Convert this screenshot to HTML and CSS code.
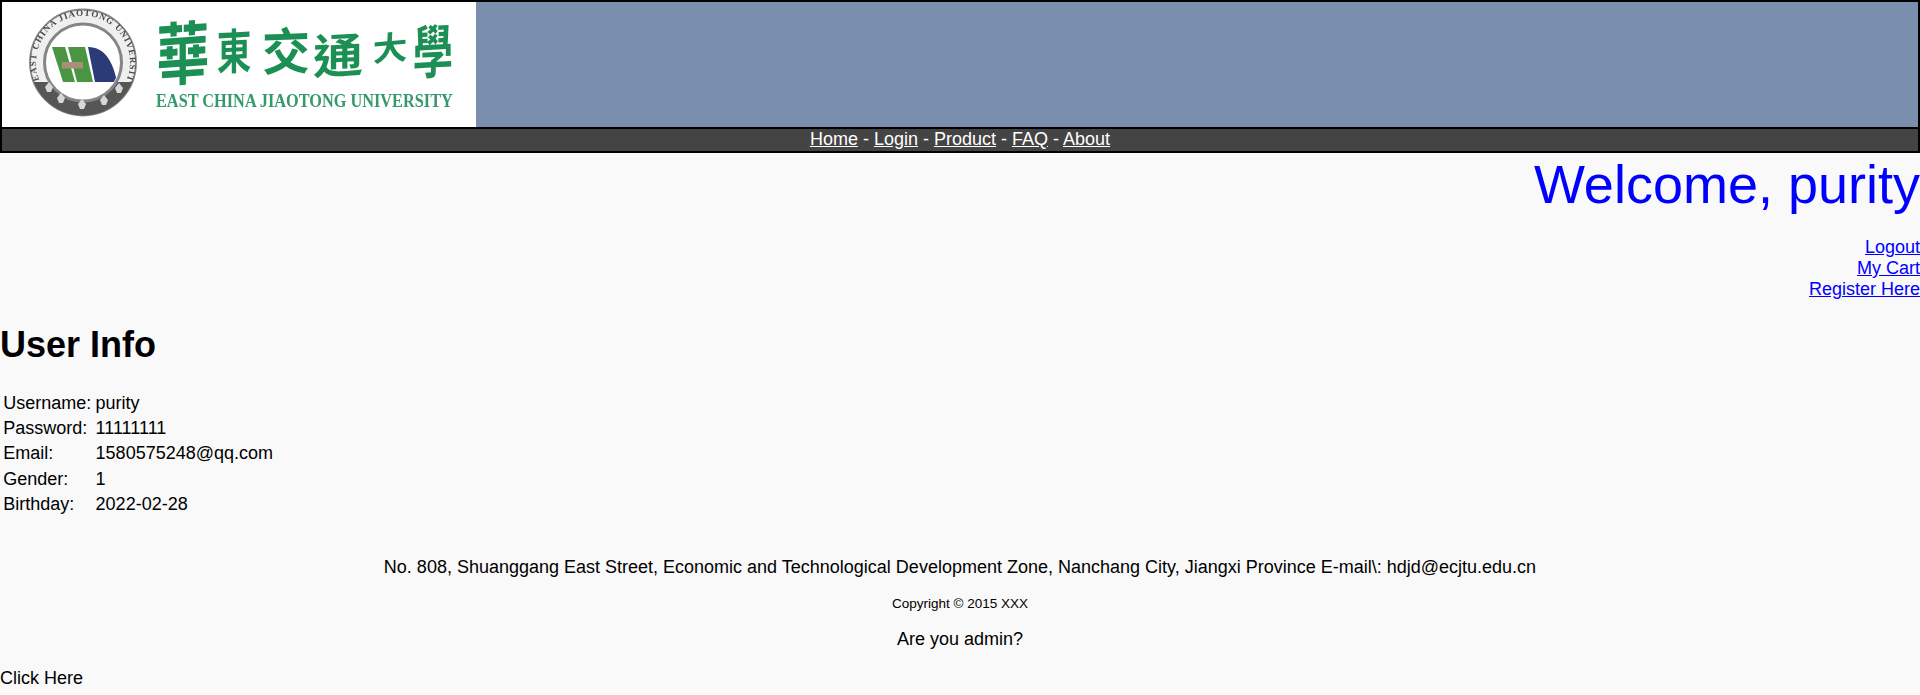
FILE: index.html
```html
<!DOCTYPE html>
<html lang="en">
<head>
<meta charset="utf-8">
<title>User Info</title>
<link rel="stylesheet" href="styles.css">
</head>
<body>
<header class="banner">
  <svg class="logo" viewBox="0 0 474 125" width="474" height="125" role="img" aria-label="East China Jiaotong University">
    <defs>
      <clipPath id="sealClip"><circle cx="81" cy="60.5" r="53"/></clipPath>
      <clipPath id="coreClip"><circle cx="81" cy="60.5" r="36.5"/></clipPath>
      <path id="sealArc" d="M37.3 78 A47 47 0 1 1 124.7 78" fill="none"/>
      <filter id="soft" x="-5%" y="-5%" width="110%" height="110%"><feGaussianBlur stdDeviation=".65"/></filter>
    </defs>
    <g filter="url(#soft)">
      <circle cx="81" cy="60.5" r="53" fill="#efefef" stroke="#858585" stroke-width="1.8"/>
      <path class="seal-band" d="M0 80H160V125H0Z" clip-path="url(#sealClip)"/>
      <text class="seal-text"><textPath href="#sealArc">EAST CHINA JIAOTONG UNIVERSITY</textPath></text>
      <circle cx="81" cy="60.5" r="38.5" fill="#fff" stroke="#858585" stroke-width="3"/>
      <g clip-path="url(#coreClip)">
        <path d="M50 45H63L73 80H61Z" fill="#4a9543"/>
        <path d="M66 45H83L91 80H75Z" fill="#4a9543"/>
        <path d="M86 45C103 45 111 60 115 80H93Z" fill="#2b3a78"/>
      </g>
      <rect x="60" y="60" width="21" height="6.5" fill="#a98f78"/>
      <g fill="#d8d8d8">
        <path d="M43 85l4-5 4 5-2 5h-4Z"/><path d="M55 96l4-5 4 5-2 5h-4Z"/><path d="M76 102l4-5 4 5-2 5h-4Z"/><path d="M98 98l4-5 4 5-2 5h-4Z"/><path d="M113 86l4-5 4 5-2 5h-4Z"/>
      </g>
      <g class="cn">
        <text transform="translate(181 77) skewY(-4) scale(1.1 1.42)">華</text>
        <text transform="translate(232 67) skewY(-3) scale(.72 1)">東</text>
        <text transform="translate(284 68) skewY(-2) scale(1 1.04)">交</text>
        <text transform="translate(336 71) skewY(-3) scale(1.04 .98)">通</text>
        <text transform="translate(388 58) skewY(-5) scale(.72 .68)">大</text>
        <text transform="translate(431 71) skewY(-3) scale(.84 1.2)">學</text>
      </g>
      <text class="en" transform="translate(154 105) scale(1 1.1)">EAST CHINA JIAOTONG UNIVERSITY</text>
    </g>
  </svg>
</header>
<nav class="nav">
  <a href="#">Home</a> - <a href="#">Login</a> - <a href="#">Product</a> - <a href="#">FAQ</a> - <a href="#">About</a>
</nav>
<section class="account">
  <h1 class="welcome">Welcome, purity</h1>
  <a href="#">Logout</a><br>
  <a href="#">My Cart</a><br>
  <a href="#">Register Here</a>
</section>
<h2 class="title">User Info</h2>
<table class="info">
  <tr><td>Username:</td><td>purity</td></tr>
  <tr><td>Password:</td><td>11111111</td></tr>
  <tr><td>Email:</td><td>1580575248@qq.com</td></tr>
  <tr><td>Gender:</td><td>1</td></tr>
  <tr><td>Birthday:</td><td>2022-02-28</td></tr>
</table>
<footer class="footer">
  <p class="address">No. 808, Shuanggang East Street, Economic and Technological Development Zone, Nanchang City, Jiangxi Province E-mail\: hdjd@ecjtu.edu.cn</p>
  <p class="copyright">Copyright © 2015 XXX</p>
  <p class="admin">Are you admin?</p>
</footer>
<a class="click" href="#">Click Here</a>
</body>
</html>
```

FILE: styles.css
```css
html, body {
  margin: 0;
  padding: 0;
}
body {
  background: #f9f9f9;
  color: #000;
  font-family: "Liberation Sans", Arial, sans-serif;
  font-size: 18px;
}
.banner {
  border: 2px solid #000;
  border-bottom: 0;
  background: #7a8eae;
  height: 125px;
}
.logo {
  display: block;
  background: #fff;
}
.seal-band {
  fill: #565656;
}
.seal-text {
  font-family: "Liberation Serif", serif;
  font-weight: 700;
  font-size: 9px;
  letter-spacing: .9px;
  fill: #4a4a4a;
}
.cn text {
  font-family: "Noto Sans CJK TC", sans-serif;
  font-weight: 700;
  font-size: 48px;
  text-anchor: middle;
  fill: #1c8f55;
}
.en {
  font-family: "Liberation Serif", serif;
  font-weight: 700;
  font-size: 16.3px;
  fill: #34996a;
}
.nav {
  border: 2px solid #000;
  background: #444;
  color: #fff;
  text-align: center;
  height: 22px;
  line-height: 21px;
}
.nav a {
  color: #fff;
}
.account {
  text-align: right;
}
.account a {
  color: #00f;
}
.welcome {
  margin: 0 0 22px;
  font-size: 54px;
  font-weight: 400;
  line-height: 62px;
  color: #00f;
}
.title {
  margin: 24px 0 25px;
  font-size: 36px;
  line-height: 41px;
}
.info {
  border-spacing: 2px;
}
.info td {
  padding: 1px 1.2px;
  line-height: 21.2px;
}
.footer {
  text-align: center;
}
.address {
  margin: 39px 0 0;
}
.copyright {
  margin: 18px 0 0;
  font-size: 13.5px;
}
.admin {
  margin: 18px 0 0;
}
.click {
  display: block;
  margin-top: 18px;
  color: #000;
  text-decoration: none;
}
```
